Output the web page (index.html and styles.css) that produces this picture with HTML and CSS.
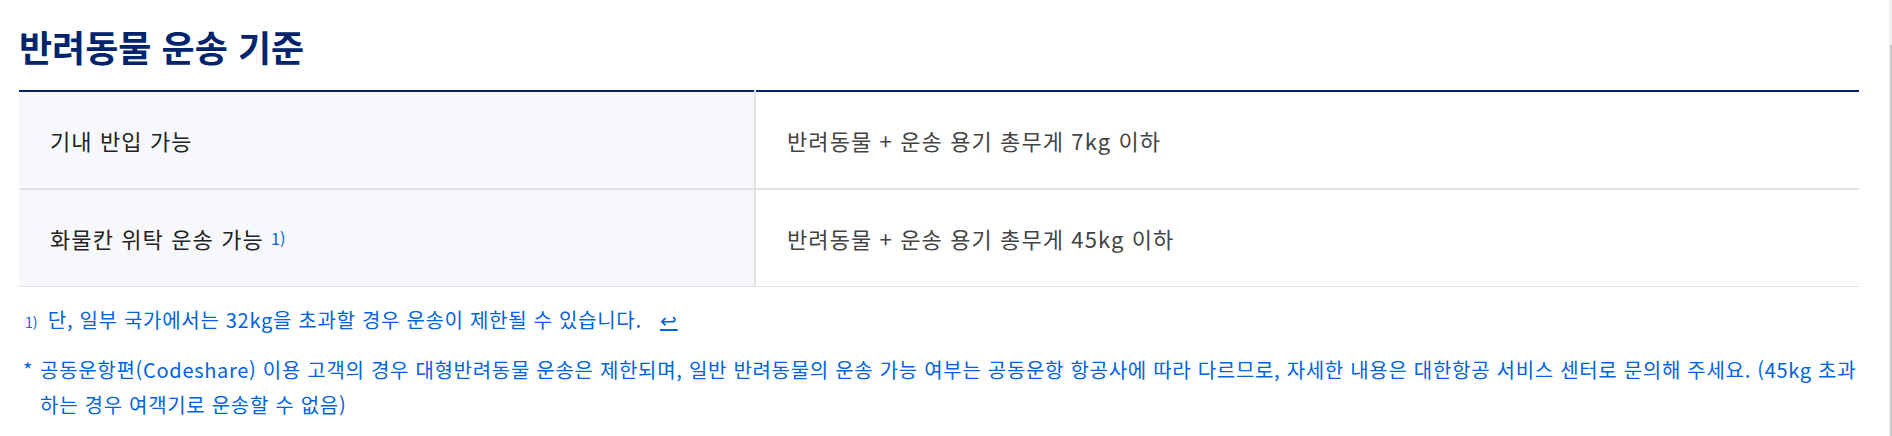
FILE: index.html
```html
<!DOCTYPE html>
<html lang="ko">
<head>
    <meta charset="UTF-8">
    <meta name="viewport" content="width=device-width, initial-scale=1.0">
    <title>반려동물 운송 기준</title>
    <link rel="stylesheet" href="styles.css">
</head>
<body>
    <div class="section">
        <h2 class="title">반려동물 운송 기준</h2>

        <!-- 기준 표 -->
        <table class="rule-table">
            <tr>
                <th>기내 반입 가능</th>
                <td>반려동물 + 운송 용기 총무게 7kg 이하</td>
            </tr>
            <tr>
                <th>화물칸 위탁 운송 가능 <sup class="ref"><a href="#fn1">1)</a></sup></th>
                <td>반려동물 + 운송 용기 총무게 45kg 이하</td>
            </tr>
        </table>

        <!-- 각주 -->
        <p class="footnote" id="fn1">
            <span class="fn-num">1)</span>
            단, 일부 국가에서는 32kg을 초과할 경우 운송이 제한될 수 있습니다.
            <a href="#" class="back">↩</a>
        </p>

        <p class="note">
            <span class="star">*</span>
            <span>공동운항편(Codeshare) 이용 고객의 경우 대형반려동물 운송은 제한되며, 일반 반려동물의 운송 가능 여부는 공동운항 항공사에 따라 다르므로, 자세한 내용은 대한항공 서비스 센터로 문의해 주세요. (45kg 초과하는 경우 여객기로 운송할 수 없음)</span>
        </p>
    </div>

    <div class="scrollbar"><div class="thumb"></div></div>
</body>
</html>
```

FILE: styles.css
```css
body {
    font-family: "Noto Sans CJK KR", "Noto Sans", sans-serif;
    margin: 0;
    padding: 0;
    background-color: #fff;
    color: #222;
}

.section {
    width: 1840px;
    padding: 21px 0 0 19px;
}

.title {
    margin: 0 0 19px;
    font-size: 36px;
    font-weight: 700;
    line-height: 50px;
    color: #00256c;
}

.rule-table {
    width: 100%;
    border-collapse: collapse;
    border-top: 2px solid #00256c;
}

.rule-table th,
.rule-table td {
    height: 96px;
    padding: 0 31px;
    text-align: left;
    font-size: 22px;
    font-weight: 400;
    letter-spacing: 1.1px;
    border-bottom: 2px solid #e1e1e1;
}

.rule-table tr:last-child th,
.rule-table tr:last-child td {
    border-bottom-width: 1px;
}

.rule-table th {
    width: 673px;
    background-color: #f7f8fc;
    color: #222;
    border-right: 2px solid #e1e1e1;
}

.rule-table td {
    color: #444;
}

.ref {
    font-size: 16px;
    letter-spacing: 0;
    vertical-align: 3px;
}

.ref a {
    color: #0064de;
    text-decoration: none;
}

.footnote {
    margin: 18px 0 0;
    font-size: 20px;
    letter-spacing: 0.7px;
    line-height: 30px;
    color: #0064de;
}

.fn-num {
    display: inline-block;
    margin: 0 4px 0 6px;
    font-size: 14px;
    letter-spacing: 0;
}

.back {
    margin-left: 12px;
    color: #0064de;
}

.note {
    display: flex;
    gap: 7px;
    margin: 15px 0 0;
    padding-left: 4px;
    font-size: 20px;
    letter-spacing: 0.7px;
    line-height: 35px;
    color: #0064de;
}

.scrollbar {
    position: fixed;
    top: 0;
    right: 0;
    width: 3px;
    height: 100%;
    background-color: #f1f1f1;
}

.scrollbar .thumb {
    margin-top: 45px;
    width: 2px;
    margin-left: 1px;
    height: 400px;
    background-color: #c8c8c8;
}
```
